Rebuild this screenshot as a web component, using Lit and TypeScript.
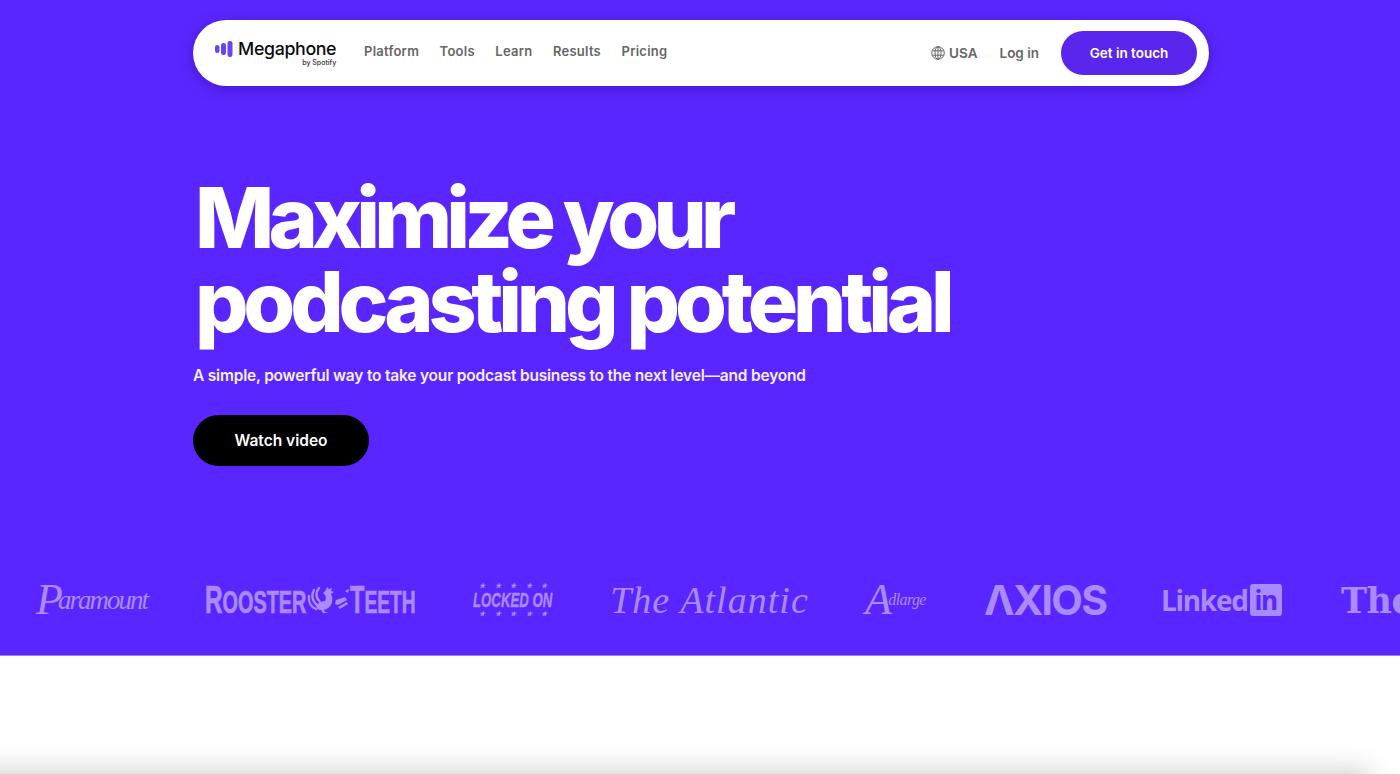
import { LitElement, html, css } from "lit";
import { customElement } from "lit/decorators.js";

@customElement("app-root")
export class AppRoot extends LitElement {
  static styles = css`
    :host { display: block; height: 774px; overflow: hidden; background: #fff; font-family: Inter, "Liberation Sans", sans-serif; }
    a { text-decoration: none; color: inherit; }
    .hero { height: 656px; box-sizing: border-box; background: #5a26ff; padding-top: 20px; display: flex; flex-direction: column; overflow: hidden; border-bottom: 1px solid #a07cf5; }
    .nav { margin-left: 193px; width: 1016px; height: 66px; box-sizing: border-box; flex: none; background: #fff; border-radius: 33px; box-shadow: 0 3px 14px rgba(30, 0, 110, .35); display: flex; align-items: center; padding: 0 12px 0 22px; color: #666; font-size: 13.5px; font-weight: 600; }
    .brand { display: flex; align-items: center; gap: 5px; margin-top: -2px; width: 121px; flex: none; }
    .brand svg { flex: none; margin-top: -7px; }
    .brand-text { display: flex; flex-direction: column; align-items: flex-end; color: #0b0b0b; }
    .brand-name { font-size: 17.8px; font-weight: 500; line-height: 20px; letter-spacing: -.35px; }
    .brand-by { font-size: 7px; font-weight: 500; line-height: 7px; color: #333; }
    .links { display: flex; gap: 20.5px; margin-left: 28px; margin-top: -5px; font-size: 13px; }
    .links a { letter-spacing: .25px; }
    .right { margin-left: auto; display: flex; align-items: center; margin-top: -1px; }
    .usa { display: flex; align-items: center; gap: 4px; }
    .login { margin-left: 22px; }
    .cta { margin-left: 22px; width: 136px; height: 44px; border-radius: 22px; background: #5a26ed; color: #fff; display: flex; align-items: center; justify-content: center; font-weight: 600; }
    h1 { margin: 90px 0 0 195px; color: #fff; font-size: 84px; line-height: 84px; font-weight: 800; letter-spacing: -5.2px; white-space: nowrap; }
    .l1 { letter-spacing: -5.8px; }
    .sub { margin: 21px 0 0 193px; color: #f4efff; font-size: 15.5px; line-height: 22px; font-weight: 600; letter-spacing: -.2px; white-space: nowrap; }
    .watch { margin: 28px 0 0 193px; width: 176px; height: 51px; flex: none; border-radius: 26px; background: #000; color: #fff; font-size: 15.5px; font-weight: 600; display: flex; align-items: center; justify-content: center; }
    .logos { margin-top: 109px; padding-left: 36px; display: flex; align-items: center; gap: 57px; height: 50px; color: #a98bff; white-space: nowrap; }
    .logo { flex: none; display: flex; align-items: center; justify-content: center; height: 50px; }
    .squeeze { display: inline-block; transform-origin: left center; }

    .paramount { width: 112px; justify-content: flex-start; font: italic 400 27px "Liberation Serif", serif; letter-spacing: -2px; }
    .paramount .big { font-size: 44px; line-height: 30px; margin-right: -3px; font-weight: 400; }

    .rooster { width: 210px; justify-content: flex-start; font: 700 31px "Liberation Sans", sans-serif; -webkit-text-stroke: .7px #a98bff; }
    .rooster small { font-size: 31px; }
    .rooster b { font-size: 38px; font-weight: 700; }
    .w-rooster { width: 102px; flex: none; }
    .w-rooster .squeeze { transform: scaleX(.64); }
    .rooster svg { flex: none; width: 43px; height: 32px; }
    .w-teeth { width: 65px; flex: none; }
    .w-teeth .squeeze { transform: scaleX(.62); }

    .locked { width: 82px; flex-direction: column; font: italic 700 21px "Liberation Sans", sans-serif; line-height: 20px; }
    .locked-line { width: 80px; height: 20px; display: flex; }
    .locked-line .squeeze { transform: scaleX(.63); -webkit-text-stroke: .4px #a98bff; }
    .stars { width: 82px; font-size: 7px; line-height: 8px; display: flex; justify-content: space-between; padding: 0 7px; box-sizing: border-box; }

    .atlantic { width: 197px; font: italic 400 38px "Liberation Serif", serif; letter-spacing: 1.05px; }
    .adlarge { width: 62px; justify-content: flex-start; font: italic 400 16px "Liberation Serif", serif; letter-spacing: -.6px; }
    .adlarge .big { font-size: 44px; line-height: 30px; margin-right: -3px; }

    .axios { width: 122px; justify-content: flex-start; font-size: 41px; font-weight: 700; letter-spacing: -1.7px; }
    .linkedin { width: 121px; justify-content: flex-start; font: 700 28px "Open Sans", sans-serif; letter-spacing: -1.3px; gap: 2px; margin-left: -2px; margin-right: 2px; }
    .in { width: 32px; height: 32px; border-radius: 3px; background: #a98bff; color: #5a26ff; font-size: 26px; display: flex; align-items: center; justify-content: center; flex: none; }
    .the { font: 700 35px "DejaVu Serif", serif; letter-spacing: -.5px; }

    .below { height: 118px; overflow: hidden; background: #fff; }
    .card { margin: 118px 0 0 -40px; width: 1410px; height: 60px; box-shadow: 0 0 30px rgba(0, 0, 0, .24); }
  `;

  render() {
    const stars = html`<span class="stars"><span>★</span><span>★</span><span>★</span><span>★</span><span>★</span></span>`;
    return html`
      <section class="hero">
        <nav class="nav">
          <a class="brand">
            <svg width="18" height="16" viewBox="0 0 18 16" fill="#6a45f5">
              <rect x="0" y="4" width="4.5" height="8" rx="2.2"></rect>
              <rect x="6" y="2" width="5" height="12" rx="2.2"></rect>
              <rect x="12.5" y="0" width="5" height="16" rx="2.2"></rect>
            </svg>
            <span class="brand-text">
              <span class="brand-name">Megaphone</span>
              <span class="brand-by">by Spotify</span>
            </span>
          </a>
          <div class="links">
            <a>Platform</a><a>Tools</a><a>Learn</a><a>Results</a><a>Pricing</a>
          </div>
          <div class="right">
            <a class="usa">
              <svg width="14" height="14" viewBox="0 0 14 14" fill="none" stroke="#666" stroke-width="1">
                <circle cx="7" cy="7" r="6.3"></circle>
                <ellipse cx="7" cy="7" rx="3" ry="6.3"></ellipse>
                <path d="M7 .7v12.6M1.2 4.8h11.6M1.2 9.2h11.6"></path>
              </svg>
              USA
            </a>
            <a class="login">Log in</a>
            <a class="cta">Get in touch</a>
          </div>
        </nav>
        <h1><span class="l1">Maximize your</span><br />podcasting potential</h1>
        <p class="sub">A simple, powerful way to take your podcast business to the next level—and beyond</p>
        <a class="watch">Watch video</a>
        <div class="logos">
          <div class="logo paramount"><span class="big">P</span>aramount</div>
          <div class="logo rooster">
            <span class="w-rooster"><span class="squeeze"><b>R</b><small>OOSTER</small></span></span>
            <svg viewBox="0 0 43 32" fill="none" stroke="#a98bff" stroke-linecap="round">
              <path fill="#a98bff" stroke="none" d="M9 21c3-2 6-4 9-4 1-2 1-4 0-6l-2-2 3-3 1-3 2 2 3-1-1 3 3 1-3 2c1 3 2 5 1 8-1 4-4 7-8 8l1 2 4 1h-6l-2-3c-3 0-5-2-5-5z"></path>
              <path stroke-width="2.4" d="M13 18C9 14 8 9 12 4M10 21C5 17 4 11 7 6M9 25C4 23 1 18 2 12"></path>
              <path fill="#a98bff" stroke="none" d="M29 16l9-3 2 3-9 5-3-1zM31 23l9-5 1 2-8 5zM38 7l4-2-1 4z"></path>
            </svg>
            <span class="w-teeth"><span class="squeeze"><b>T</b><small>EETH</small></span></span>
          </div>
          <div class="logo locked">
            ${stars}
            <span class="locked-line"><span class="squeeze">LOCKED ON</span></span>
            ${stars}
          </div>
          <div class="logo atlantic">The Atlantic</div>
          <div class="logo adlarge"><span class="big">A</span>dlarge</div>
          <div class="logo axios">ΛXIOS</div>
          <div class="logo linkedin">Linked<span class="in">in</span></div>
          <div class="logo the">The Ringer</div>
        </div>
      </section>
      <section class="below"><div class="card"></div></section>
    `;
  }
}
